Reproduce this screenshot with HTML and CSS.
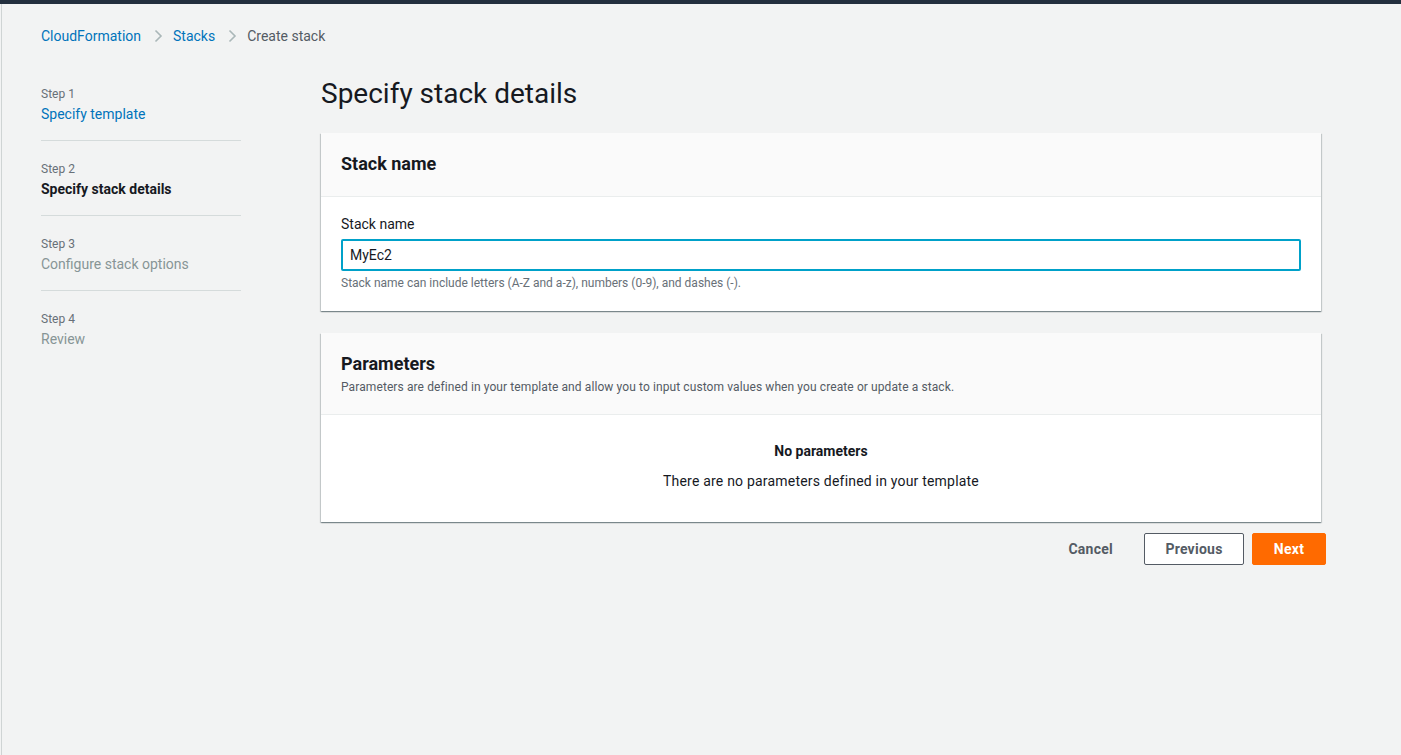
FILE: index.html
```html
<!DOCTYPE html>
<html lang="en">
<head>
<meta charset="utf-8">
<title>Create stack - CloudFormation</title>
<link rel="stylesheet" href="styles.css">
</head>
<body>
<div class="topbar"></div>
<div class="page">
  <nav class="breadcrumbs">
    <a class="crumb link" href="#">CloudFormation</a>
    <svg class="chev" width="16" height="16" viewBox="0 0 16 16"><path d="M5.5 2.5 L11 8 L5.5 13.5" fill="none" stroke="#aab7b8" stroke-width="1.6"/></svg>
    <a class="crumb link" href="#">Stacks</a>
    <svg class="chev" width="16" height="16" viewBox="0 0 16 16"><path d="M5.5 2.5 L11 8 L5.5 13.5" fill="none" stroke="#aab7b8" stroke-width="1.6"/></svg>
    <span class="crumb current">Create stack</span>
  </nav>
  <div class="layout">
    <ol class="steps">
      <li class="step">
        <div class="step-label">Step 1</div>
        <a class="step-title link" href="#">Specify template</a>
      </li>
      <li class="step">
        <div class="step-label">Step 2</div>
        <div class="step-title active">Specify stack details</div>
      </li>
      <li class="step">
        <div class="step-label">Step 3</div>
        <div class="step-title disabled">Configure stack options</div>
      </li>
      <li class="step last">
        <div class="step-label">Step 4</div>
        <div class="step-title disabled">Review</div>
      </li>
    </ol>
    <main class="main">
      <h1 class="page-title">Specify stack details</h1>
      <section class="card">
        <header class="card-header">
          <h2 class="card-title">Stack name</h2>
        </header>
        <div class="card-body">
          <label class="field-label" for="stackname">Stack name</label>
          <input class="input" id="stackname" type="text" value="MyEc2">
          <div class="hint">Stack name can include letters (A-Z and a-z), numbers (0-9), and dashes (-).</div>
        </div>
      </section>
      <section class="card">
        <header class="card-header">
          <h2 class="card-title">Parameters</h2>
          <p class="card-desc">Parameters are defined in your template and allow you to input custom values when you create or update a stack.</p>
        </header>
        <div class="card-body empty">
          <div class="empty-title">No parameters</div>
          <div class="empty-text">There are no parameters defined in your template</div>
        </div>
      </section>
      <div class="actions">
        <button class="btn btn-link">Cancel</button>
        <button class="btn btn-normal">Previous</button>
        <button class="btn btn-primary">Next</button>
      </div>
    </main>
  </div>
</div>
</body>
</html>
```

FILE: styles.css
```css
* { box-sizing: border-box; }
html, body { margin: 0; padding: 0; }
body {
  background: #f2f3f3;
  font-family: Roboto, "Open Sans", Arial, sans-serif;
  color: #16191f;
  font-size: 14px;
  line-height: 20px;
  height: 755px;
  overflow: hidden;
}
.topbar {
  height: 4px;
  background: #232f3e;
}
.page {
  margin-left: 1px;
  border-left: 1px solid #cfd4d4;
  height: 751px;
}
.link { color: #0073bb; text-decoration: none; }
.breadcrumbs {
  display: flex;
  align-items: center;
  padding: 20px 0 0 39px;
  height: 44px;
}
.crumb { font-size: 14px; line-height: 20px; }
.crumb.current { color: #545b64; }
.chev { margin: 0 7px 0 9px; }
.layout {
  display: grid;
  grid-template-columns: 200px 1000px;
  column-gap: 80px;
  padding-left: 39px;
  padding-top: 29px;
}
.steps {
  list-style: none;
  margin: 0;
  padding: 9px 0 0 0;
}
.step {
  padding: 20px 0 16px;
  border-bottom: 1px solid #d5dbdb;
}
.step:first-child { padding-top: 0; }
.step.last { border-bottom: none; }
.step-label {
  font-size: 12px;
  line-height: 16px;
  color: #687078;
  margin-bottom: 2px;
}
.step-title { display: block; font-size: 14px; line-height: 20px; }
.step-title.active { font-weight: 700; color: #16191f; }
.step-title.disabled { color: #879596; }
.page-title {
  margin: 0 0 20px;
  font-size: 28px;
  line-height: 36px;
  font-weight: 400;
  color: #16191f;
  position: relative;
  top: -1px;
}
.card {
  background: #fff;
  box-shadow: 0 1px 1px 0 rgba(0,28,36,.3), 1px 1px 1px 0 rgba(0,28,36,.15), -1px 1px 1px 0 rgba(0,28,36,.15);
  margin-bottom: 22px;
}
.card-header {
  background: #fafafa;
  border-bottom: 1px solid #eaeded;
  padding: 18px 20px 19px;
}
.card-title {
  margin: 0;
  font-size: 18px;
  line-height: 26px;
  font-weight: 700;
}
.card-desc {
  margin: 2px 0 0;
  font-size: 12px;
  line-height: 16px;
  color: #545b64;
  letter-spacing: .1px;
}
.card-body {
  padding: 17px 20px 20px;
}
.field-label {
  display: block;
  font-size: 14px;
  line-height: 20px;
  color: #16191f;
  margin-bottom: 5px;
}
.input {
  display: block;
  width: 100%;
  height: 32px;
  border: 2px solid #00a1c9;
  border-radius: 2px;
  padding: 0 7px;
  font: inherit;
  font-size: 14px;
  color: #16191f;
  outline: none;
  background: #fff;
}
.hint {
  margin-top: 4px;
  font-size: 12px;
  line-height: 16px;
  color: #687078;
}
.card-body.empty {
  text-align: center;
  padding: 26px 20px 31px;
}
.empty-title { font-weight: 700; }
.empty-text { margin-top: 10px; letter-spacing: .2px; }
.actions {
  display: flex;
  justify-content: flex-end;
  align-items: center;
  gap: 8px;
  margin-top: -11px;
  margin-right: -5px;
}
.btn {
  height: 32px;
  font: inherit;
  font-size: 14px;
  font-weight: 700;
  border-radius: 2px;
  cursor: pointer;
  padding: 0 20px;
  letter-spacing: .25px;
}
.btn-link {
  background: transparent;
  border: 1px solid transparent;
  color: #545b64;
  margin-right: 2px;
}
.btn-normal {
  background: #fff;
  border: 1px solid #545b64;
  color: #545b64;
  width: 100px;
}
.btn-primary {
  background: #ff6a00;
  border: 1px solid #ff6a00;
  color: #fff;
  width: 74px;
}
```
